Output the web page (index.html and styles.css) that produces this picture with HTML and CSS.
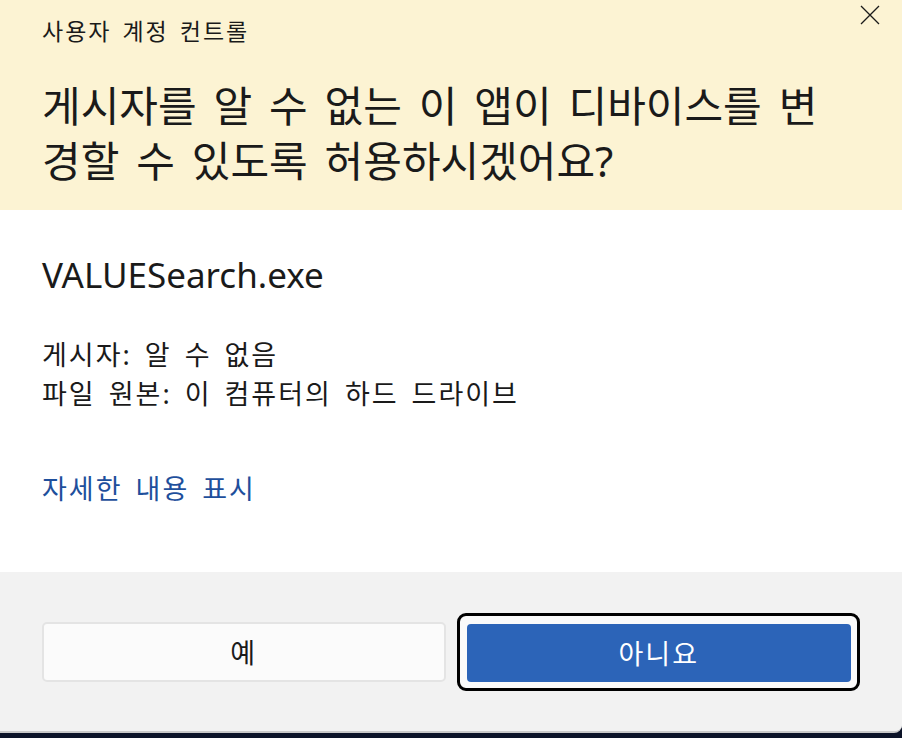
FILE: index.html
```html
<!DOCTYPE html>
<html lang="ko">
<head>
    <meta charset="UTF-8">
    <meta name="viewport" content="width=device-width, initial-scale=1.0">
    <title>사용자 계정 컨트롤</title>
    <link rel="stylesheet" href="styles.css">
</head>
<body>
    <div class="dialog">
        <div class="header">
            <div class="caption">사용자 계정 컨트롤</div>
            <button class="close" aria-label="닫기">
                <svg width="20" height="20" viewBox="0 0 20 20">
                    <path d="M1 1 L19 19 M19 1 L1 19" stroke="#1a1a1a" stroke-width="1.3" fill="none"/>
                </svg>
            </button>
            <h1 class="question">게시자를 알 수 없는 이 앱이 디바이스를 변<br>경할 수 있도록 허용하시겠어요?</h1>
        </div>

        <div class="content">
            <div class="app-name">VALUESearch.exe</div>
            <div class="details">
                <div>게시자: 알 수 없음</div>
                <div>파일 원본: 이 컴퓨터의 하드 드라이브</div>
            </div>
            <a class="more" href="#">자세한 내용 표시</a>
        </div>

        <div class="footer">
            <button class="btn btn-yes">예</button>
            <div class="focus-ring">
                <button class="btn btn-no">아니요</button>
            </div>
        </div>
    </div>
</body>
</html>
```

FILE: styles.css
```css
/* Page */
body {
    margin: 0;
    background-color: #0c1328;
    font-family: "Noto Sans", "Noto Sans CJK KR", sans-serif;
    color: #1a1a1a;
    overflow: hidden;
}

.dialog {
    width: 902px;
    background-color: #ffffff;
    border-bottom: 2px solid #c9c9c9;
    border-bottom-right-radius: 8px;
    overflow: hidden;
}

/* Yellow header */
.header {
    position: relative;
    height: 210px;
    box-sizing: border-box;
    padding: 14px 42px 0;
    background-color: #fcf3d3;
}

.caption {
    font-size: 23px;
    line-height: 34px;
    letter-spacing: 2px;
    word-spacing: 3px;
}

.close {
    position: absolute;
    top: 5px;
    right: 22px;
    width: 20px;
    height: 20px;
    padding: 0;
    border: none;
    background: none;
}

.close svg {
    display: block;
}

.question {
    margin: 30px 0 0;
    font-size: 42px;
    font-weight: normal;
    line-height: 55px;
    word-spacing: 6px;
}

/* White content */
.content {
    height: 362px;
    box-sizing: border-box;
    padding: 43px 42px 0;
}

.app-name {
    font-size: 35px;
    line-height: 44px;
}

.details {
    margin-top: 38px;
    font-size: 27px;
    line-height: 39px;
    letter-spacing: 2px;
    word-spacing: 4px;
}

.more {
    display: inline-block;
    margin-top: 56px;
    font-size: 27px;
    line-height: 39px;
    letter-spacing: 2px;
    word-spacing: 4px;
    color: #1e4f9c;
    text-decoration: none;
}

/* Buttons */
.footer {
    height: 159px;
    box-sizing: border-box;
    padding: 0 42px;
    background-color: #f2f2f2;
    display: grid;
    grid-template-columns: 1fr 1fr;
    column-gap: 11px;
    align-items: center;
}

.btn {
    font-family: "Noto Sans CJK KR", sans-serif;
    font-size: 27px;
    letter-spacing: 2px;
    border-radius: 5px;
    cursor: pointer;
}

.btn-yes {
    height: 60px;
    background-color: #fbfbfb;
    border: 2px solid #e4e4e4;
    color: #1a1a1a;
}

.focus-ring {
    height: 78px;
    box-sizing: border-box;
    padding: 8px 6px 6px 7px;
    border: 3px solid #000000;
    border-radius: 9px;
    background-color: #fafafa;
    display: flex;
}

.btn-no {
    flex: 1;
    background-color: #2c64b8;
    border: none;
    border-radius: 4px;
    color: #ffffff;
}
```
